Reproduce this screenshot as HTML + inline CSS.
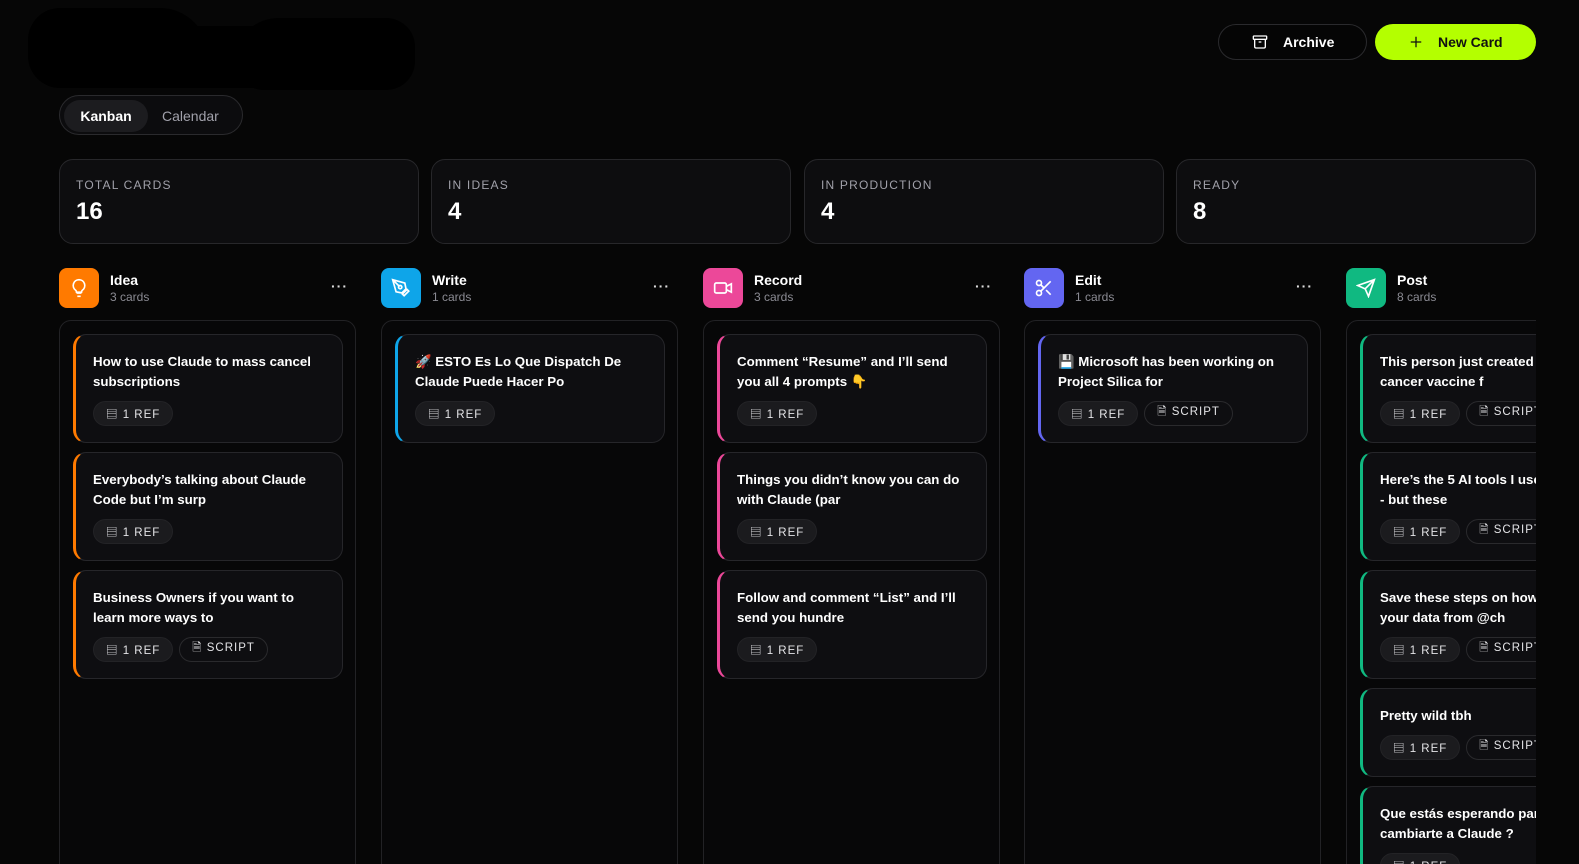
<!DOCTYPE html>
<html><head><meta charset="utf-8"><style>
*{box-sizing:border-box;margin:0;padding:0}
html,body{width:1579px;height:864px;overflow:hidden}
body{background:#060606;font-family:"Liberation Sans","Noto Sans CJK JP",sans-serif;color:#fff;position:relative}
.blob{position:absolute;background:#000;border-radius:40px}
.tabs{position:absolute;left:59px;top:95px;width:184px;height:40px;border:1px solid #2a2a2d;border-radius:20px;background:#0c0c0e}
.tab{position:absolute;top:4px;height:32px;line-height:32px;font-size:14px}
.btn{position:absolute;top:24px;height:36px;border-radius:18px;font-size:14px;font-weight:bold;display:flex;align-items:center}
.stat{position:absolute;top:159px;width:360px;height:85px;border:1px solid #27272a;border-radius:14px;background:#0d0d0f}
.stat .l{position:absolute;left:16px;top:18px;font-size:12px;letter-spacing:1.2px;color:#a1a1aa}
.stat .v{position:absolute;left:16px;top:38px;font-size:24px;font-weight:bold}
.colh{position:absolute;top:268px;height:40px;width:297px}
.ic{position:absolute;left:0;top:0;width:40px;height:40px;border-radius:8px;display:flex;align-items:center;justify-content:center}
.ct{position:absolute;left:51px;top:4px;font-size:14px;font-weight:bold}
.cc{position:absolute;left:51px;top:22px;font-size:12px;color:#8b8b93}
.dots{position:absolute;right:8px;top:10px;font-size:14px;color:#ddd;letter-spacing:1px;font-weight:bold}
.col{position:absolute;top:320px;width:297px;height:560px;border:1px solid #222225;border-radius:12px;background:#070708;padding:13px 13px;overflow:hidden}
.card{position:relative;width:270px;border:1px solid #26262a;border-radius:13px;background:#0e0e11;padding:17px 16px 16px 17px;margin-bottom:9px;border-left:3px solid}
.card .t{font-size:13.3px;font-weight:bold;line-height:20px;white-space:nowrap;overflow:hidden}
.chips{display:flex;gap:6px;margin-top:9px}
.chip{height:25px;border-radius:13px;padding:0 12px;font-size:11.5px;letter-spacing:1px;display:flex;align-items:center;gap:4px;color:#e4e4e7}
.chip.r{background:#1b1b1e;border:1px solid #232326}
.chip.s{border:1px solid #2a2a2d}
.clip{position:absolute;left:0;top:0;width:1536px;height:864px;overflow:hidden}
</style></head><body>
<div class="blob" style="left:28px;top:8px;width:180px;height:80px;border-radius:40px 60px 40px 40px"></div>
<div class="blob" style="left:120px;top:26px;width:180px;height:62px;border-radius:10px"></div>
<div class="blob" style="left:235px;top:18px;width:180px;height:72px;border-radius:60px 40px 40px 40px"></div>

<div class="tabs">
<div class="tab" style="left:4px;width:84px;background:#1c1c1f;border-radius:16px;text-align:center;font-weight:bold">Kanban</div>
<div class="tab" style="left:102px;color:#a1a1aa">Calendar</div>
</div>

<div class="btn" style="left:1218px;width:149px;border:1px solid #2a2a2d;background:#050505">
<svg style="position:absolute;left:33px" width="16" height="16" viewBox="0 0 24 24" fill="none" stroke="#fff" stroke-width="2"><rect x="2" y="3" width="20" height="5" rx="1"/><path d="M4 8v11a2 2 0 0 0 2 2h12a2 2 0 0 0 2-2V8M10 12h4"/></svg>
<span style="position:absolute;left:64px">Archive</span></div>
<div class="btn" style="left:1375px;width:161px;background:#b4ff00;color:#111">
<svg style="position:absolute;left:34px" width="14" height="14" viewBox="0 0 24 24" fill="none" stroke="#111" stroke-width="2.2"><path d="M12 3v18M3 12h18"/></svg>
<span style="position:absolute;left:63px">New Card</span></div>

<div class="stat" style="left:59px"><div class="l">TOTAL CARDS</div><div class="v">16</div></div>
<div class="stat" style="left:431px"><div class="l">IN IDEAS</div><div class="v">4</div></div>
<div class="stat" style="left:804px"><div class="l">IN PRODUCTION</div><div class="v">4</div></div>
<div class="stat" style="left:1176px"><div class="l">READY</div><div class="v">8</div></div>

<div class="clip">
<div class="colh" style="left:59px"><div class="ic" style="background:#ff7a00"><svg width="20" height="20" viewBox="0 0 24 24" fill="none" stroke="#fff" stroke-width="2"><path d="M9 18h6M10 22h4M12 2a7 7 0 0 0-4 12.7c.6.5 1 1.3 1 2.3h6c0-1 .4-1.8 1-2.3A7 7 0 0 0 12 2z"/></svg></div><div class="ct">Idea</div><div class="cc">3 cards</div><div class="dots">···</div></div>
<div class="colh" style="left:381px"><div class="ic" style="background:#0ea5e9"><svg width="20" height="20" viewBox="0 0 24 24" fill="none" stroke="#fff" stroke-width="2"><path d="M15.7 21.3l5.6-5.6-2-2L13.7 19.3zM18 13l-1.4-6.9L2 2l4.1 14.6L13 18zM2 2l7.6 7.6"/><circle cx="11" cy="11" r="2"/></svg></div><div class="ct">Write</div><div class="cc">1 cards</div><div class="dots">···</div></div>
<div class="colh" style="left:703px"><div class="ic" style="background:#ec4899"><svg width="20" height="20" viewBox="0 0 24 24" fill="none" stroke="#fff" stroke-width="2"><rect x="2" y="6" width="14" height="12" rx="2"/><path d="M16 10l6-3v10l-6-3"/></svg></div><div class="ct">Record</div><div class="cc">3 cards</div><div class="dots">···</div></div>
<div class="colh" style="left:1024px"><div class="ic" style="background:#6366f1"><svg width="20" height="20" viewBox="0 0 24 24" fill="none" stroke="#fff" stroke-width="2"><circle cx="6" cy="6" r="3"/><circle cx="6" cy="18" r="3"/><path d="M20 4L8.1 15.9M14.5 14.5L20 20M8.1 8.1L12 12"/></svg></div><div class="ct">Edit</div><div class="cc">1 cards</div><div class="dots">···</div></div>
<div class="colh" style="left:1346px"><div class="ic" style="background:#10b981"><svg width="20" height="20" viewBox="0 0 24 24" fill="none" stroke="#fff" stroke-width="2"><path d="M22 2L11 13M22 2l-7 20-4-9-9-4z"/></svg></div><div class="ct">Post</div><div class="cc">8 cards</div></div>

<div class="col" style="left:59px">
<div class="card" style="border-left-color:#ff7a00"><div class="t">How to use Claude to mass cancel<br>subscriptions</div><div class="chips"><div class="chip r">▤ 1 REF</div></div></div>
<div class="card" style="border-left-color:#ff7a00"><div class="t">Everybody’s talking about Claude<br>Code but I’m surp</div><div class="chips"><div class="chip r">▤ 1 REF</div></div></div>
<div class="card" style="border-left-color:#ff7a00"><div class="t">Business Owners if you want to<br>learn more ways to</div><div class="chips"><div class="chip r">▤ 1 REF</div><div class="chip s">🗎 SCRIPT</div></div></div>
</div>
<div class="col" style="left:381px">
<div class="card" style="border-left-color:#0ea5e9"><div class="t">🚀 ESTO Es Lo Que Dispatch De<br>Claude Puede Hacer Po</div><div class="chips"><div class="chip r">▤ 1 REF</div></div></div>
</div>
<div class="col" style="left:703px">
<div class="card" style="border-left-color:#ec4899"><div class="t">Comment “Resume” and I’ll send<br>you all 4 prompts 👇</div><div class="chips"><div class="chip r">▤ 1 REF</div></div></div>
<div class="card" style="border-left-color:#ec4899"><div class="t">Things you didn’t know you can do<br>with Claude (par</div><div class="chips"><div class="chip r">▤ 1 REF</div></div></div>
<div class="card" style="border-left-color:#ec4899"><div class="t">Follow and comment “List” and I’ll<br>send you hundre</div><div class="chips"><div class="chip r">▤ 1 REF</div></div></div>
</div>
<div class="col" style="left:1024px">
<div class="card" style="border-left-color:#6366f1"><div class="t">💾 Microsoft has been working on<br>Project Silica for</div><div class="chips"><div class="chip r">▤ 1 REF</div><div class="chip s">🗎 SCRIPT</div></div></div>
</div>
<div class="col" style="left:1346px">
<div class="card" style="border-left-color:#10b981"><div class="t">This person just created a<br>cancer vaccine f</div><div class="chips"><div class="chip r">▤ 1 REF</div><div class="chip s">🗎 SCRIPT</div></div></div>
<div class="card" style="border-left-color:#10b981"><div class="t">Here’s the 5 AI tools I use<br>- but these</div><div class="chips"><div class="chip r">▤ 1 REF</div><div class="chip s">🗎 SCRIPT</div></div></div>
<div class="card" style="border-left-color:#10b981"><div class="t">Save these steps on how to<br>your data from @ch</div><div class="chips"><div class="chip r">▤ 1 REF</div><div class="chip s">🗎 SCRIPT</div></div></div>
<div class="card" style="border-left-color:#10b981"><div class="t">Pretty wild tbh</div><div class="chips"><div class="chip r">▤ 1 REF</div><div class="chip s">🗎 SCRIPT</div></div></div>
<div class="card" style="border-left-color:#10b981"><div class="t">Que estás esperando para<br>cambiarte a Claude ?</div><div class="chips"><div class="chip r">▤ 1 REF</div></div></div>
</div>
</div>
</body></html>
